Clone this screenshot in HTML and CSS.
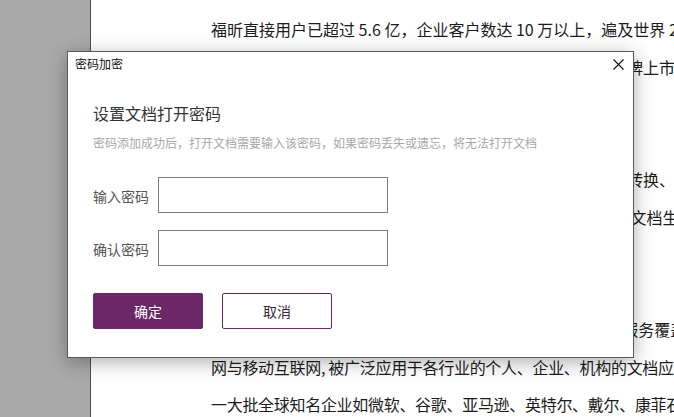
FILE: index.html
```html
<!DOCTYPE html>
<html lang="zh-CN">
<head>
<meta charset="utf-8">
<title>密码加密</title>
<link rel="stylesheet" href="styles.css">
</head>
<body>
<div class="app">
  <div class="gutter"></div>
  <div class="page">
    <p class="line">福昕直接用户已超过 5.6 亿，企业客户数达 10 万以上，遍及世界 200 多个国家和地区</p>
    <p class="line">二零二零年九月，福昕软件在上海证券交易所科创板正式挂牌上市，成为</p>
    <p class="line"></p>
    <p class="line"></p>
    <p class="line">福昕拥有完整的核心技术，提供文档的创建、编辑、保护、转换、管理等服务</p>
    <p class="line">全面覆盖各类办公场景，帮助企业高效安全处理和管理电子 文档生命周期</p>
    <p class="line"></p>
    <p class="line"></p>
    <p class="line">福昕致力于为全球用户提供专业可靠的产品与解决方案，&#8194;&#8201;服务覆盖桌面</p>
    <p class="line tight">网与移动互联网, 被广泛应用于各行业的个人、企业、机构的文档应用</p>
    <p class="line tight">一大批全球知名企业如微软、谷歌、亚马逊、英特尔、戴尔、康菲石油</p>
  </div>
</div>

<div class="dialog" role="dialog" aria-label="密码加密">
  <div class="titlebar">
    <span class="title">密码加密</span>
    <svg class="close" width="11" height="11" viewBox="0 0 11 11" aria-label="关闭">
      <path d="M0.5 0.5 L10.5 10.5 M10.5 0.5 L0.5 10.5" stroke="#111" stroke-width="1.1" fill="none"/>
    </svg>
  </div>
  <div class="body">
    <h2 class="heading">设置文档打开密码</h2>
    <p class="desc">密码添加成功后，打开文档需要输入该密码，如果密码丢失或遗忘，将无法打开文档</p>
    <div class="field">
      <label class="label">输入密码</label>
      <div class="input"></div>
    </div>
    <div class="field field-2">
      <label class="label">确认密码</label>
      <div class="input"></div>
    </div>
    <div class="actions">
      <button class="btn btn-primary">确定</button>
      <button class="btn btn-secondary">取消</button>
    </div>
  </div>
</div>
</body>
</html>
```

FILE: styles.css
```css
* { box-sizing: border-box; }
html, body {
  margin: 0;
  padding: 0;
  width: 674px;
  height: 417px;
  overflow: hidden;
  font-family: "Noto Sans CJK SC", "Noto Sans", sans-serif;
}
.app {
  display: flex;
  width: 674px;
  height: 417px;
}
.gutter {
  width: 91px;
  flex: none;
  background: #a9a9a9;
  border-right: 1px solid #4e4e4e;
}
.page {
  flex: 1;
  background: #fff;
  padding: 11px 0 0 120px;
  overflow: hidden;
}
.line {
  margin: 0;
  height: 37.5px;
  line-height: 37.5px;
  font-size: 16px;
  color: #1c1c1c;
  white-space: nowrap;
}
.tight { letter-spacing: -0.3px; }
.dialog {
  position: absolute;
  left: 67px;
  top: 51px;
  width: 567px;
  height: 307px;
  background: #fff;
  border: 1px solid #5a5a5a;
  box-shadow: 0 4px 18px rgba(0, 0, 0, 0.32);
}
.titlebar {
  height: 24px;
  display: flex;
  align-items: center;
  justify-content: space-between;
  padding: 0 9px 0 7px;
}
.title {
  font-size: 12px;
  line-height: 24px;
  color: #111;
}
.close { display: block; }
.body {
  padding: 0 0 0 25px;
}
.heading {
  margin: 25px 0 0;
  font-size: 16px;
  line-height: 24px;
  font-weight: normal;
  color: #333;
}
.desc {
  margin: 9px 0 0;
  font-size: 12px;
  line-height: 18px;
  color: #a8a8a8;
}
.field {
  display: flex;
  align-items: center;
  margin-top: 25px;
  height: 36px;
}
.field-2 { margin-top: 17px; }
.label {
  width: 65px;
  font-size: 14px;
  line-height: 20px;
  padding-top: 2px;
  color: #555;
}
.input {
  width: 230px;
  height: 36px;
  border: 1px solid #7d7d7d;
  background: #fff;
}
.actions {
  display: flex;
  gap: 19px;
  margin-top: 27px;
}
.btn {
  width: 110px;
  height: 36px;
  border-radius: 2px;
  font-family: inherit;
  font-size: 14px;
  padding: 0;
  cursor: pointer;
}
.btn-primary {
  background: #6c2769;
  border: 1px solid #6c2769;
  color: #fff;
}
.btn-secondary {
  background: #fff;
  border: 1px solid #6c2769;
  color: #3a2a3a;
}
```
